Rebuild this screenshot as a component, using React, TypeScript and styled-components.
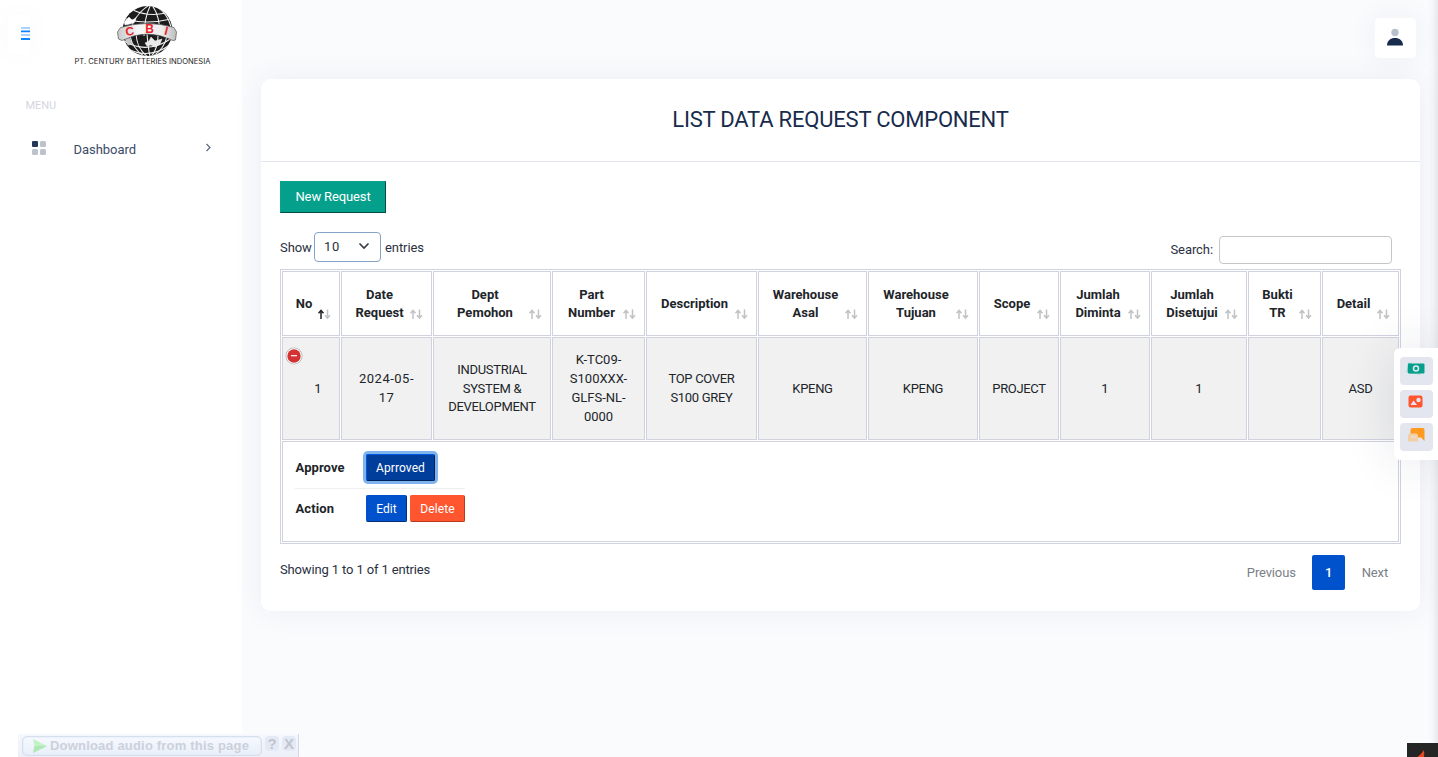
import React from "react";
import styled, { createGlobalStyle, css } from "styled-components";

const GlobalStyle = createGlobalStyle`
  * { box-sizing: border-box; }
  html, body { margin: 0; padding: 0; }
  body {
    font-family: Roboto, "Liberation Sans", sans-serif;
    font-size: 13px;
    color: #212529;
    background: #fafbfd;
    overflow: hidden;
  }
  button, input { font-family: inherit; }
`;

const Page = styled.div`
  position: relative;
  display: flex;
  height: 757px;
  overflow: hidden;
`;

const Sidebar = styled.aside`
  width: 242px;
  flex: none;
  background: #fff;
`;

const Brand = styled.div`
  display: flex;
  align-items: flex-start;
  height: 80px;
  padding-left: 8px;
`;

const BurgerButton = styled.button`
  width: 22px;
  height: 40px;
  margin-top: 14px;
  padding: 0;
  border: 0;
  border-radius: 4px;
  background: #fff;
  display: flex;
  align-items: center;
  justify-content: flex-end;
  box-shadow: 0 0 30px rgba(40, 50, 90, 0.03);
`;

const Logo = styled.svg`
  margin-left: 40px;
  display: block;
`;

const MenuTitle = styled.div`
  padding: 19px 0 0 25.500px;
  height: 50px;
  font-size: 11px;
  line-height: 14px;
  letter-spacing: -0.1px;
  color: #d5d6df;
`;

const MenuItem = styled.a`
  display: flex;
  align-items: center;
  height: 36px;
  padding: 0 30px 0 32px;
  color: #3c4b68;
  letter-spacing: -0.05px;
  svg { display: block; }
`;

const MenuLabel = styled.span`
  flex: 1;
  margin-left: 27.500px;
  padding-top: 3px;
`;

const Main = styled.main`
  flex: 1;
  min-width: 0;
  padding: 0 18px 0 19px;
`;

const TopBar = styled.header`
  display: flex;
  justify-content: flex-end;
  height: 79px;
  padding: 18px 4px 0 0;
`;

const UserButton = styled.button`
  width: 41px;
  height: 40px;
  padding: 0 2px 2px 0;
  border: 0;
  border-radius: 4px;
  background: #fff;
  display: flex;
  align-items: center;
  justify-content: center;
  box-shadow: 0 0 30px rgba(40, 50, 90, 0.06);
`;

const Card = styled.section`
  height: 532px;
  border-radius: 10px;
  background: #fff;
  box-shadow: 0 0 30px rgba(40, 50, 90, 0.07);
`;

const CardHeader = styled.div`
  height: 83px;
  display: flex;
  align-items: center;
  justify-content: center;
  border-bottom: 1px solid #e4e6ef;
`;

const CardTitle = styled.h3`
  margin: 0;
  font-size: 22px;
  font-weight: 400;
  line-height: 26px;
  letter-spacing: -0.2px;
  color: #172b4c;
`;

const CardBody = styled.div`
  padding: 19px 19px 0;
`;

const NewButton = styled.button`
  display: block;
  width: 106px;
  height: 32px;
  padding: 0 0 1px;
  border: 1px solid;
  border-color: #08a18d #034d43 #034d43 #08a18d;
  background: #05a08c;
  color: #fff;
  font-size: 13px;
  letter-spacing: -0.13px;
`;

const Controls = styled.div`
  display: flex;
  justify-content: space-between;
  height: 56px;
  padding: 19px 9px 0 0;
  color: #2a3142;
  letter-spacing: -0.07px;
`;

const LengthControl = styled.label`
  display: flex;
  align-items: center;
  height: 30px;
`;

const LengthText = styled.span`
  width: 34px;
`;

const LengthSelect = styled.span`
  display: flex;
  align-items: center;
  justify-content: space-between;
  width: 67px;
  height: 30px;
  margin-right: 4px;
  padding: 0 10px 2px 9px;
  border: 1px solid #86a4c8;
  border-radius: 4px;
  letter-spacing: 0.6px;
`;

const SearchControl = styled.label`
  display: flex;
  align-items: center;
  gap: 6px;
  height: 28px;
  margin-top: 4px;
`;

const SearchText = styled.span`
  padding-bottom: 2px;
`;

const SearchInput = styled.input`
  width: 173px;
  height: 28px;
  border: 1px solid #c6c6c9;
  border-radius: 4px;
  background: #fff;
`;

const Table = styled.table`
  table-layout: fixed;
  width: 1121px;
  border: 1px solid #d1d2e0;
  border-collapse: separate;
  border-spacing: 1px;
`;

const HeadCell = styled.th`
  position: relative;
  height: 65px;
  padding: 0 26px 0 12px;
  border: 1px solid #d1d2e0;
  font-size: 13px;
  font-weight: 700;
  line-height: 18px;
  text-align: center;
  vertical-align: middle;
  white-space: pre-line;
`;

const SortMark = styled.svg`
  position: absolute;
  right: 8.500px;
  bottom: 15px;
`;

const BodyCell = styled.td<{ $first?: boolean; $spacing: number }>`
  position: relative;
  height: 103px;
  padding: 1px 0 0;
  border: 1px solid #d1d2e0;
  background: #f1f1f1;
  line-height: 18.850px;
  letter-spacing: ${(p) => p.$spacing}px;
  text-align: center;
  vertical-align: middle;
  white-space: pre-line;
  ${(p) => p.$first && css`padding-left: 14px;`}
`;

const CollapseMark = styled.svg`
  position: absolute;
  left: 0.500px;
  top: 7.700px;
`;

const ChildCell = styled.td`
  height: 101px;
  padding: 0 12px;
  border: 1px solid #d1d2e0;
  vertical-align: top;
`;

const DetailList = styled.ul`
  width: 170px;
  margin: 0;
  padding: 5px 0 0;
  list-style: none;
`;

const DetailRow = styled.li<{ $line?: boolean }>`
  display: flex;
  align-items: center;
  height: ${(p) => (p.$line ? 42 : 39)}px;
  border-bottom: ${(p) => (p.$line ? "1px solid #efefef" : "0")};
`;

const DetailTitle = styled.span`
  width: 71px;
  padding-left: 0.500px;
  font-weight: 700;
  letter-spacing: 0.1px;
`;

const SmallButton = styled.button<{ $kind: "focus" | "primary" | "danger"; $w: number }>`
  width: ${(p) => p.$w}px;
  height: 27px;
  padding: 0;
  border: 1px solid;
  border-radius: 2px;
  color: #fff;
  font-size: 12px;
  letter-spacing: 0.1px;
  & + & { margin-left: 3px; }
  ${(p) => p.$kind === "focus" && css`
    background: #003e9c;
    border-color: #0057e0 #00215a #00215a #0057e0;
    box-shadow: 0 0 0 3px #7fb3ee;
  `}
  ${(p) => p.$kind === "primary" && css`
    background: #0052cc;
    border-color: #0052cc #002f78 #002f78 #0052cc;
  `}
  ${(p) => p.$kind === "danger" && css`
    background: #ff5630;
    border-color: #ff5630 #b93a1d #b93a1d #ff5630;
  `}
`;

const CardFooter = styled.div`
  display: flex;
  justify-content: space-between;
  padding-top: 11px;
`;

const Info = styled.div`
  padding-top: 5px;
  line-height: 19px;
  letter-spacing: -0.14px;
  color: #2a3142;
`;

const Pager = styled.nav`
  display: flex;
  align-items: center;
  height: 35px;
  padding-right: 13px;
  gap: 16.500px;
  letter-spacing: -0.15px;
  color: #7b8087;
`;

const CurrentPage = styled.span`
  display: flex;
  align-items: center;
  justify-content: center;
  width: 33px;
  height: 35px;
  border-radius: 2px;
  background: #0052cc;
  color: #fff;
  font-weight: 500;
`;

const Toolbox = styled.div`
  position: absolute;
  top: 348px;
  right: 0;
  width: 44px;
  height: 112px;
  padding: 9px 5px 0 6px;
  display: flex;
  flex-direction: column;
  gap: 5px;
  border-radius: 6px 0 0 6px;
  background: #fff;
  box-shadow: 0 0 50px rgba(40, 50, 90, 0.13);
`;

const Tool = styled.button`
  height: 28px;
  padding: 0 2px 5px 0;
  border: 0;
  border-radius: 4px;
  background: #e4e6ef;
  display: flex;
  align-items: center;
  justify-content: center;
`;

const EdgeShade = styled.div`
  position: absolute;
  top: 0;
  right: 0;
  width: 10px;
  height: 100%;
  background: linear-gradient(to right, rgba(60, 60, 80, 0), rgba(60, 60, 80, 0.03) 50%, rgba(60, 60, 80, 0.1));
`;

const CornerBadge = styled.div`
  position: absolute;
  right: 0;
  bottom: 0;
  width: 31px;
  height: 14px;
  background: #252525;
  svg { display: block; }
`;

const AudioBar = styled.div`
  position: absolute;
  left: 18px;
  bottom: 0;
  width: 281px;
  height: 23px;
  padding: 2px 2px 0 4px;
  display: flex;
  gap: 3px;
  border-right: 1px solid #d5d8e2;
  background: linear-gradient(#f5f9fe, #eceff7);
`;

const AudioButton = styled.div`
  display: flex;
  align-items: center;
  width: 241px;
  height: 20px;
  padding: 0 0 1px 10px;
  border: 1px solid #d6dfee;
  border-radius: 5px;
  background: linear-gradient(#f6f9fe, #e9f0fa);
  box-shadow: inset 0 0 2px #d6dfee;
  color: #ccd0db;
  font: bold 13px "Liberation Sans", sans-serif;
  letter-spacing: 0.19px;
  white-space: nowrap;
  svg { flex: none; margin-right: 3px; }
`;

const AudioKey = styled.div`
  width: 14px;
  height: 15px;
  border-radius: 4px;
  background: #e4eaf5;
  color: #c0c4cf;
  font: bold 15px/16px "Liberation Sans", sans-serif;
  text-align: center;
`;

const columns: { title: string; width: number; value: string; spacing?: number }[] = [
  { title: "No", width: 58, value: "1" },
  { title: "Date\nRequest", width: 91, value: "2024-05-\n17", spacing: 0.5 },
  { title: "Dept\nPemohon", width: 118, value: "INDUSTRIAL\nSYSTEM &\nDEVELOPMENT", spacing: -0.3 },
  { title: "Part\nNumber", width: 93, value: "K-TC09-\nS100XXX-\nGLFS-NL-\n0000" },
  { title: "Description", width: 111, value: "TOP COVER\nS100 GREY", spacing: -0.3 },
  { title: "Warehouse\nAsal", width: 109, value: "KPENG", spacing: -0.3 },
  { title: "Warehouse\nTujuan", width: 110, value: "KPENG", spacing: -0.3 },
  { title: "Scope", width: 80, value: "PROJECT", spacing: -0.35 },
  { title: "Jumlah\nDiminta", width: 90, value: "1" },
  { title: "Jumlah\nDisetujui", width: 96, value: "1" },
  { title: "Bukti\nTR", width: 73, value: "" },
  { title: "Detail", width: 77, value: "ASD", spacing: -0.2 },
];

const Sort = ({ active }: { active?: boolean }) => (
  <SortMark width="13" height="11" viewBox="0 0 13 11" fill="none" strokeWidth="1.5">
    <path d="M3 10V1.8M0.5 4.3L3 1.5L5.500 4.3" stroke={active ? "#212529" : "#c1c2c4"} />
    <path d="M9.5 0.5V8.8M7 6.3L9.5 9.1L12 6.3" stroke="#c1c2c4" />
  </SortMark>
);

const BrandLogo = () => (
  <Logo width="140" height="70" viewBox="70 0 140 70" overflow="visible">
    <defs>
      <clipPath id="globe"><circle cx="147.5" cy="31" r="25" /></clipPath>
      <linearGradient id="band" x1="0" x2="1">
        <stop offset="0" stopColor="#c9c9c9" />
        <stop offset=".35" stopColor="#f7f7f7" />
        <stop offset=".75" stopColor="#ededed" />
        <stop offset="1" stopColor="#bdbdbd" />
      </linearGradient>
    </defs>
    <circle cx="147.5" cy="31" r="25" fill="#1c1c1c" />
    <g clipPath="url(#globe)" fill="none" stroke="#f2f2f2" strokeWidth="1.1">
      <path d="M151 4C137 12 131 24 130 34M151 4C146 14 144 24 144 36M151 4C158 12 160 24 160 36M151 4C166 10 171 22 172 34" />
      <path d="M133 10Q148 17 166 13M126 19Q146 25 171 19M123 46Q147 62 171 44M124 41Q147 55 172 38" />
      <path d="M130 36C132 46 138 53 147 58M136 34C137 46 141 52 148 57M147 34C148 46 149 52 150 57M158 36C158 45 155 52 151 57M167 36C165 46 160 52 152 57" />
      <path d="M124 22L129 17L132 20L136 18L135 22L130 24L125 25Z" fill="#fff" strokeWidth=".5" />
      <path d="M145 43L149 41L151 37L155 41L162 39L160 44L155 47L151 45L147 46Z" fill="#e9e9e9" strokeWidth=".5" />
      <path d="M123 35L129 37L132 44L128 45Z" fill="#c5c5c5" strokeWidth=".5" />
    </g>
    <path d="M117.500 32L120.500 27.500Q147 19.500 174 27.500L176.500 32L175.500 40L173 40.500Q147 27.500 122 40.500L118.500 39Z" fill="url(#band)" stroke="#555" strokeWidth=".7" />
    <g fill="#e8242b" fontFamily="Liberation Sans, sans-serif" fontWeight="bold" fontSize="12">
      <text x="125.500" y="35.500" transform="rotate(-8 130 32)">C</text>
      <text x="145.200" y="32.800">B</text>
      <text x="164.500" y="35" transform="rotate(14 166 32)">I</text>
    </g>
    <text x="74.500" y="63.800" textLength="136" lengthAdjust="spacingAndGlyphs" fontFamily="Inter, sans-serif" fontSize="7.400" fontWeight="400" fill="#222">PT. CENTURY BATTERIES INDONESIA</text>
  </Logo>
);

export default function App() {
  return (
    <Page>
      <GlobalStyle />
      <Sidebar>
        <Brand>
          <BurgerButton aria-label="Toggle menu">
            <svg width="9" height="14" viewBox="0 0 9 14">
              <path fill="#a9d3fc" d="M0 0h9v2H0zM0 7h9v2H0z" />
              <path fill="#0a84ff" d="M0 3.500h9v1.700H0zM0 11h9v2H0z" />
            </svg>
          </BurgerButton>
          <BrandLogo />
        </Brand>
        <MenuTitle>MENU</MenuTitle>
        <MenuItem>
          <svg width="14" height="14" viewBox="0 0 14 14" fill="#bcc3ce">
            <rect width="6" height="6" rx="1" fill="#253858" />
            <rect x="8" width="6" height="6" rx="1.500" />
            <rect y="8" width="6" height="6" rx="1.500" />
            <rect x="8" y="8" width="6" height="6" rx="1.500" />
          </svg>
          <MenuLabel>Dashboard</MenuLabel>
          <svg width="7" height="10" viewBox="0 0 7 10" fill="none" stroke="#5b6880" strokeWidth="1.200">
            <path d="M1.500 1L5 4.500L1.500 8" />
          </svg>
        </MenuItem>
      </Sidebar>

      <Main>
        <TopBar>
          <UserButton aria-label="Account">
            <svg width="18" height="18" viewBox="0 0 18 18">
              <circle cx="9" cy="4.500" r="3.700" fill="#b9bfcc" />
              <path d="M1 17.500C1 12.500 4.500 10 9 10S17 12.500 17 17.500Z" fill="#172b4c" />
            </svg>
          </UserButton>
        </TopBar>
        <Card>
          <CardHeader><CardTitle>LIST DATA REQUEST COMPONENT</CardTitle></CardHeader>
          <CardBody>
            <NewButton>New Request</NewButton>
            <Controls>
              <LengthControl>
                <LengthText>Show</LengthText>
                <LengthSelect>
                  10
                  <svg width="12" height="8" viewBox="0 0 12 8" fill="none" stroke="#343a40" strokeWidth="1.600">
                    <path d="M1.500 1.500L6 6L10.500 1.500" />
                  </svg>
                </LengthSelect>
                entries
              </LengthControl>
              <SearchControl><SearchText>Search:</SearchText><SearchInput /></SearchControl>
            </Controls>
            <Table>
              <colgroup>
                {columns.map((c) => <col key={c.title} style={{ width: c.width }} />)}
              </colgroup>
              <thead>
                <tr>
                  {columns.map((c, i) => (
                    <HeadCell key={c.title}>{c.title}<Sort active={i === 0} /></HeadCell>
                  ))}
                </tr>
              </thead>
              <tbody>
                <tr>
                  {columns.map((c, i) => (
                    <BodyCell key={c.title} $first={i === 0} $spacing={c.spacing ?? 0}>
                      {i === 0 && (
                        <CollapseMark width="20" height="20" viewBox="0 0 20 20">
                          <circle cx="10" cy="10" r="8.500" fill="#b5b5b5" />
                          <circle cx="10" cy="10" r="7.700" fill="#fff" />
                          <circle cx="10" cy="10" r="6.700" fill="#d33333" />
                          <path d="M7 9.700h6" stroke="#fff" strokeWidth="1.200" />
                        </CollapseMark>
                      )}
                      {c.value}
                    </BodyCell>
                  ))}
                </tr>
                <tr>
                  <ChildCell colSpan={12}>
                    <DetailList>
                      <DetailRow $line>
                        <DetailTitle>Approve</DetailTitle>
                        <SmallButton $kind="focus" $w={69}>Aprroved</SmallButton>
                      </DetailRow>
                      <DetailRow>
                        <DetailTitle>Action</DetailTitle>
                        <SmallButton $kind="primary" $w={41}>Edit</SmallButton>
                        <SmallButton $kind="danger" $w={55}>Delete</SmallButton>
                      </DetailRow>
                    </DetailList>
                  </ChildCell>
                </tr>
              </tbody>
            </Table>
            <CardFooter>
              <Info>Showing 1 to 1 of 1 entries</Info>
              <Pager>
                <span>Previous</span>
                <CurrentPage>1</CurrentPage>
                <span>Next</span>
              </Pager>
            </CardFooter>
          </CardBody>
        </Card>
      </Main>

      <EdgeShade />
      <Toolbox>
        <Tool aria-label="Payments">
          <svg width="19" height="13" viewBox="0 0 19 13">
            <path d="M2 .5L6 1.500L15 12.500L3 11.500L.5 10Z" fill="#8fcfc6" />
            <rect x="2" y="1.500" width="16.500" height="10" rx="1" fill="#05a08c" />
            <circle cx="10" cy="6.500" r="2.500" fill="none" stroke="#e4e6ef" strokeWidth="1.500" />
          </svg>
        </Tool>
        <Tool aria-label="Gallery">
          <svg width="15" height="13" viewBox="0 0 15 13">
            <rect x=".5" y=".5" width="14" height="12" rx="2" fill="#ff5630" />
            <circle cx="10.500" cy="5" r="2.200" fill="#e4e6ef" />
            <path d="M2.500 10L5.500 5.500L9 10Z" fill="#e4e6ef" />
          </svg>
        </Tool>
        <Tool aria-label="Messages">
          <svg width="18" height="16" viewBox="0 0 18 16">
            <path d="M5.500 1h10.500Q17.500 1 17.500 3V14L14 10.500H3.500V3Q3.500 1 5.500 1Z" fill="#ff991f" />
            <path d="M3 6.500h6Q11 6.500 11 8.500V14.500H1V8.500Q1 6.500 3 6.500Z" fill="#f3cfa5" />
            <path d="M4 10h5" stroke="#e4e6ef" />
          </svg>
        </Tool>
      </Toolbox>
      <AudioBar>
        <AudioButton>
          <svg width="14" height="14" viewBox="0 0 14 14">
            <path d="M0 0L14 7L0 14L1.500 7Z" fill="#c3f2c6" />
            <path d="M0 14L1.500 7H14Z" fill="#b0e6b8" />
          </svg>
          Download audio from this page
        </AudioButton>
        <AudioKey>?</AudioKey>
        <AudioKey>X</AudioKey>
      </AudioBar>
      <CornerBadge>
        <svg width="31" height="14" viewBox="0 0 31 14">
          <path d="M10 14Q15 11 16.500 7Q18 10 17 14Z" fill="#e8481c" />
        </svg>
      </CornerBadge>
    </Page>
  );
}
